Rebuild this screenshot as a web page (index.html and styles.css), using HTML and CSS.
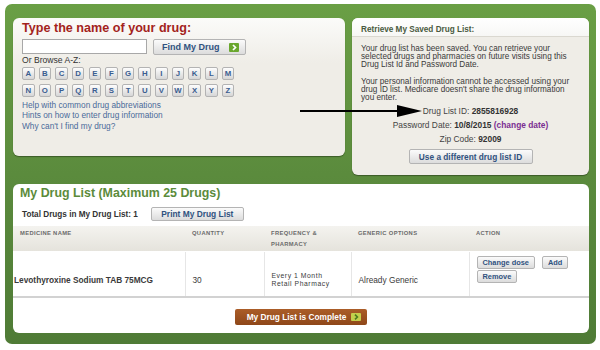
FILE: index.html
```html
<!DOCTYPE html>
<html>
<head>
<meta charset="utf-8">
<link rel="stylesheet" href="styles.css">
</head>
<body>
<div class="frame">
  <div class="top">
    <section class="search">
      <h1 class="search-title">Type the name of your drug:</h1>
      <div class="search-row">
        <input class="search-input" type="text">
        <button class="btn btn-find">Find My Drug
          <svg class="go" width="10" height="9" viewBox="0 0 10 9"><rect width="10" height="9" rx="1" fill="#6aa72e"/><path d="M4 2 L6.5 4.5 L4 7" stroke="#fff" stroke-width="1.7" fill="none"/></svg>
        </button>
      </div>
      <div class="browse-label">Or Browse A-Z:</div>
      <div class="letters">
        <span class="letter">A</span><span class="letter">B</span><span class="letter">C</span><span class="letter">D</span><span class="letter">E</span><span class="letter">F</span><span class="letter">G</span><span class="letter">H</span><span class="letter">I</span><span class="letter">J</span><span class="letter">K</span><span class="letter">L</span><span class="letter">M</span>
        <span class="letter">N</span><span class="letter">O</span><span class="letter">P</span><span class="letter">Q</span><span class="letter">R</span><span class="letter">S</span><span class="letter">T</span><span class="letter">U</span><span class="letter">V</span><span class="letter">W</span><span class="letter">X</span><span class="letter">Y</span><span class="letter">Z</span>
      </div>
      <ul class="help-links">
        <li>Help with common drug abbreviations</li>
        <li>Hints on how to enter drug information</li>
        <li>Why can't I find my drug?</li>
      </ul>
    </section>
    <section class="saved">
      <div class="saved-head">Retrieve My Saved Drug List:</div>
      <div class="saved-body">
        <p class="saved-text">Your drug list has been saved. You can retrieve your<br>selected drugs and pharmacies on future visits using this<br>Drug List Id and Password Date.</p>
        <p class="saved-text saved-text-2">Your personal information cannot be accessed using your<br>drug ID list. Medicare doesn't share the drug information<br>you enter.</p>
        <div class="saved-info">
          <div>Drug List ID: <b>2855816928</b></div>
          <div>Password Date: <b>10/8/2015</b> <b class="change">(change date)</b></div>
          <div>Zip Code: <b>92009</b></div>
        </div>
        <button class="btn btn-diff">Use a different drug list ID</button>
      </div>
    </section>
  </div>
  <section class="list">
    <h2 class="list-title">My Drug List (Maximum 25 Drugs)</h2>
    <div class="total-row">
      <span class="total">Total Drugs in My Drug List: 1</span>
      <button class="btn btn-print">Print My Drug List</button>
    </div>
    <table class="drugs">
      <colgroup>
        <col class="c1"><col class="c2"><col class="c3"><col class="c4"><col class="c5">
      </colgroup>
      <thead>
        <tr class="head-row">
          <th>Medicine Name</th>
          <th>Quantity</th>
          <th>Frequency &amp;<br>Pharmacy</th>
          <th>Generic Options</th>
          <th>Action</th>
        </tr>
      </thead>
      <tbody>
        <tr class="drug-row">
          <td class="med">Levothyroxine Sodium TAB 75MCG</td>
          <td class="txt">30</td>
          <td class="txt freq">Every 1 Month<br>Retail Pharmacy</td>
          <td class="txt">Already Generic</td>
          <td class="actions">
            <div class="act-row"><button class="btn btn-act">Change dose</button><button class="btn btn-act">Add</button></div>
            <div class="act-row"><button class="btn btn-act">Remove</button></div>
          </td>
        </tr>
      </tbody>
    </table>
    <div class="list-foot">
      <button class="btn-complete">My Drug List is Complete
        <svg width="10" height="8" viewBox="0 0 10 8"><rect width="10" height="8" rx="1" fill="#c3cf4c"/><path d="M4 1.6 L6.4 4 L4 6.4" stroke="#4c7a1f" stroke-width="1.6" fill="none"/></svg>
      </button>
    </div>
  </section>
  <svg class="arrow" width="122" height="12" viewBox="0 0 122 12"><line x1="0" y1="6" x2="98" y2="6" stroke="#000" stroke-width="2"/><polygon points="97,0 122,6 97,12" fill="#000"/></svg>
</div>
</body>
</html>
```

FILE: styles.css
```css
body {
  margin: 0;
  background: #fff;
  font-family: "Liberation Sans", Arial, sans-serif;
  color: #3a3a3a;
}

.frame {
  position: relative;
  margin: 4px 0 0 5px;
  width: 591px;
  height: 340px;
  box-sizing: border-box;
  padding: 14px 7px 10px 8px;
  background: linear-gradient(#6a9f45, #5b8b3d 50%, #4f7b36);
  border-radius: 7px;
}

.top {
  display: flex;
  gap: 7px;
  align-items: flex-start;
  height: 157px;
}

/* Left: search panel */
.search {
  width: 332px;
  height: 138px;
  box-sizing: border-box;
  padding: 3px 9px 0;
  background: linear-gradient(#fbfbf9, #efede7 45px);
  border-radius: 6px;
  box-shadow: 0 1px 1px rgba(0, 0, 0, .35);
}

.search-title {
  margin: 0;
  font-size: 12.6px;
  line-height: 15px;
  font-weight: bold;
  color: #a3231c;
}

.search-row {
  display: flex;
  gap: 6px;
  margin-top: 3px;
}

.search-input {
  width: 125px;
  height: 15px;
  box-sizing: border-box;
  margin: 0;
  padding: 0;
  border: 1px solid #a8a8a8;
  background: #fff;
}

.btn {
  margin: 0;
  box-sizing: border-box;
  font-family: "Liberation Sans", Arial, sans-serif;
  font-weight: bold;
  color: #30527f;
  background: linear-gradient(#fbfbfb, #dcdcdc);
  border: 1px solid #b4b4b4;
  border-radius: 2px;
  padding: 0;
  cursor: pointer;
}

.btn-find {
  width: 93px;
  height: 16px;
  display: flex;
  align-items: center;
  justify-content: space-between;
  padding: 0 6px 0 8px;
  font-size: 9px;
}

.go {
  display: block;
}

.browse-label {
  font-size: 8.6px;
  line-height: 10px;
  color: #333;
}

.letters {
  display: grid;
  grid-template-columns: repeat(13, 12.5px);
  grid-auto-rows: 13px;
  column-gap: 4.15px;
  row-gap: 4px;
  margin-top: 2px;
}

.letter {
  display: flex;
  align-items: center;
  justify-content: center;
  font-size: 7.8px;
  font-weight: bold;
  color: #3a5d90;
  background: linear-gradient(#fdfdfd, #d6d6d6);
  border: 1px solid #b3b3b3;
  border-radius: 2px;
}

.help-links {
  list-style: none;
  margin: 2.5px 0 0;
  padding: 0;
  font-size: 8.3px;
  line-height: 10.5px;
  color: #4a6b9a;
}

/* Right: saved list panel */
.saved {
  width: 237px;
  height: 157px;
  box-sizing: border-box;
  background: #efede7;
  border-radius: 6px;
  box-shadow: 0 1px 1px rgba(0, 0, 0, .35);
  overflow: hidden;
}

.saved-head {
  padding: 6px 9px 0;
  height: 12px;
  line-height: 12px;
  font-size: 8.2px;
  font-weight: bold;
  color: #4a5a40;
  background: linear-gradient(#fff, #f7f7f5);
  border-bottom: 1px solid #dad8d0;
}

.saved-body {
  padding: 8px 9px 0;
}

.saved-text {
  margin: 0;
  font-size: 8.2px;
  line-height: 8px;
  white-space: nowrap;
  color: #3a3a3a;
}

.saved-text-2 {
  margin-top: 9px;
}

.saved-info {
  margin-top: 2px;
  text-align: center;
  font-size: 8.4px;
  line-height: 14px;
  color: #444;
}

.saved-info b {
  color: #333;
}

.saved-info .change {
  color: #7a2e92;
}

.btn-diff {
  display: block;
  width: 124px;
  height: 15px;
  margin: 3px auto 0;
  font-size: 8.3px;
}

/* Bottom: drug list */
.list {
  margin-top: 9px;
  height: 149px;
  box-sizing: border-box;
  padding-top: 2px;
  background: #fff;
  border-radius: 6px;
  overflow: hidden;
}

.list-title {
  margin: 0;
  padding-left: 7px;
  font-size: 12.4px;
  line-height: 15px;
  font-weight: bold;
  color: #5b8b3b;
}

.total-row {
  display: flex;
  align-items: center;
  gap: 13px;
  margin-top: 6px;
  padding-left: 9px;
}

.total {
  font-size: 8.2px;
  font-weight: bold;
  color: #333;
}

.btn-print {
  width: 93px;
  height: 14px;
  font-size: 8.4px;
}

.drugs {
  margin-top: 5px;
  width: 576px;
  border-collapse: collapse;
  table-layout: fixed;
}

.c1 { width: 172px; }
.c2 { width: 79px; }
.c3 { width: 87px; }
.c4 { width: 118px; }
.c5 { width: 120px; }

.head-row {
  height: 25px;
  background: linear-gradient(#f4f3ef, #e5e3dc);
}

.head-row th {
  padding: 2px 7px 0;
  vertical-align: top;
  text-align: left;
  font-size: 5.8px;
  letter-spacing: .35px;
  line-height: 10.5px;
  text-transform: uppercase;
  font-weight: bold;
  color: #6b6b6b;
}

.drug-row {
  height: 46px;
  border-bottom: 2px solid #d2d2d2;
}

.drug-row td {
  border-left: 1px solid #e6e6e6;
  border-top: 1px solid #fff;
  font-size: 8.3px;
  color: #3a3a3a;
  vertical-align: middle;
  padding: 13px 7px 0;
}

.drug-row td.med {
  border-left: none;
  padding-left: 1px;
  font-weight: bold;
}

.drug-row td.freq {
  font-size: 6.8px;
  letter-spacing: .55px;
  line-height: 7.9px;
}

.drug-row td.actions {
  vertical-align: top;
  padding: 4px 7px 0;
}

.act-row {
  display: flex;
  gap: 7px;
  margin-bottom: 1px;
}

.btn-act {
  height: 13px;
  padding: 0 5px;
  font-size: 7.4px;
}

.list-foot {
  display: flex;
  justify-content: center;
  margin-top: 11px;
}

.btn-complete {
  display: flex;
  align-items: center;
  gap: 5px;
  height: 16px;
  margin: 0;
  padding: 0 6px 0 12px;
  border: none;
  border-radius: 2px;
  background: linear-gradient(#ab5d28, #8e4719);
  color: #fff;
  font-family: "Liberation Sans", Arial, sans-serif;
  font-size: 8.3px;
  font-weight: bold;
}

.arrow {
  position: absolute;
  left: 295px;
  top: 101px;
}
```
